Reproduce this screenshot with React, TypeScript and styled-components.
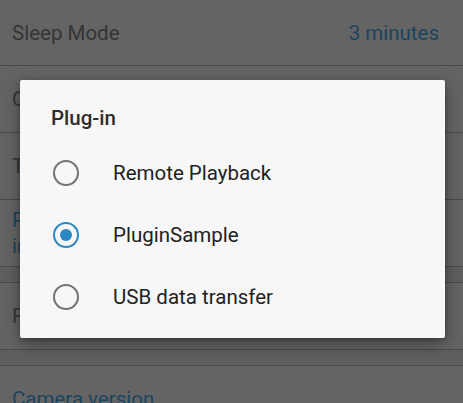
import React from "react";
import styled, { createGlobalStyle } from "styled-components";

const Global = createGlobalStyle`
  html, body { margin: 0; padding: 0; }
  body {
    width: 463px;
    height: 403px;
    overflow: hidden;
    background: #646464;
    font-family: Roboto, "Liberation Sans", sans-serif;
  }
`;

const Screen = styled.div`
  position: relative;
  width: 463px;
  height: 403px;
  overflow: hidden;
  background: #646464;
`;

const List = styled.div`
  display: flex;
  flex-direction: column;
`;

const Row = styled.div<{ $h?: number }>`
  display: flex;
  align-items: center;
  justify-content: space-between;
  height: ${(p) => p.$h ?? 66}px;
  padding: 0 24px 0 12px;
  border-bottom: 1px solid #494949;
  flex-shrink: 0;
`;

const Gap = styled.div`
  height: 15px;
  background: #5f5f5f;
  border-bottom: 1px solid #494949;
  flex-shrink: 0;
`;

const Label = styled.span<{ $link?: boolean }>`
  font-size: 20.5px;
  line-height: 26px;
  color: ${(p) => (p.$link ? "#1b4460" : "#353535")};
  white-space: pre-line;
`;

const Value = styled.span`
  font-size: 20.5px;
  color: #1b4460;
`;

const Dialog = styled.div`
  position: absolute;
  left: 20px;
  top: 80px;
  width: 425px;
  box-sizing: border-box;
  padding: 26px 0 10px;
  background: #f7f7f7;
  border-radius: 2px;
  box-shadow: 0 6px 18px rgba(0, 0, 0, 0.35), 0 2px 5px rgba(0, 0, 0, 0.25);
  display: flex;
  flex-direction: column;
`;

const Title = styled.div`
  padding: 0 31px;
  font-size: 20.5px;
  font-weight: 500;
  line-height: 24px;
  color: #2e2e2e;
  margin-bottom: 12px;
`;

const Option = styled.div`
  display: flex;
  align-items: center;
  height: 62px;
  padding-left: 33px;
  gap: 34px;
`;

const Radio = styled.span<{ $checked?: boolean }>`
  width: 26px;
  height: 26px;
  box-sizing: border-box;
  border-radius: 50%;
  border: 2.5px solid ${(p) => (p.$checked ? "#2b87c3" : "#737373")};
  display: flex;
  align-items: center;
  justify-content: center;
  flex-shrink: 0;
  &::after {
    content: "";
    display: ${(p) => (p.$checked ? "block" : "none")};
    width: 12px;
    height: 12px;
    border-radius: 50%;
    background: #2b87c3;
  }
`;

const OptionText = styled.span`
  font-size: 20.5px;
  color: #222222;
`;

const options = [
  { label: "Remote Playback", checked: false },
  { label: "PluginSample", checked: true },
  { label: "USB data transfer", checked: false },
];

export default function App() {
  return (
    <>
      <Global />
      <Screen>
        <List>
          <Row $h={65}>
            <Label>Sleep Mode</Label>
            <Value>3 minutes</Value>
          </Row>
          <Row>
            <Label>Camera sound</Label>
          </Row>
          <Row>
            <Label>Time zone</Label>
          </Row>
          <Row>
            <Label $link>{"Plug-in settings for the\ninstalled plug-in"}</Label>
          </Row>
          <Gap />
          <Row>
            <Label>Format</Label>
          </Row>
          <Gap />
          <Row>
            <Label $link>Camera version</Label>
          </Row>
        </List>
        <Dialog>
          <Title>Plug-in</Title>
          {options.map((o) => (
            <Option key={o.label}>
              <Radio $checked={o.checked} />
              <OptionText>{o.label}</OptionText>
            </Option>
          ))}
        </Dialog>
      </Screen>
    </>
  );
}
